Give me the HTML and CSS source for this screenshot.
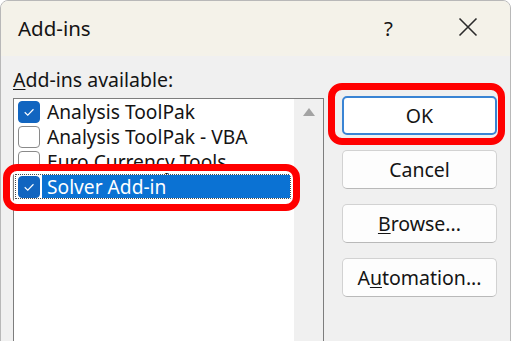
FILE: index.html
```html
<!DOCTYPE html>
<html lang="en">
<head>
  <meta charset="UTF-8">
  <title>Add-ins</title>
  <link rel="stylesheet" href="styles.css">
</head>
<body>
  <div class="stage">
    <div class="dialog">
      <div class="titlebar">
        <span class="title">Add-ins</span>
        <span class="help">?</span>
        <span class="close">
          <svg viewBox="0 0 20 20" width="20" height="20">
            <path d="M1.5 1.5 L18.5 18.5 M18.5 1.5 L1.5 18.5"/>
          </svg>
        </span>
      </div>

      <div class="content">
        <div class="left">
          <div class="label"><u>A</u>dd-ins available:</div>
          <div class="listbox">
            <ul class="items">
              <li class="item">
                <span class="check on"><svg viewBox="0 0 21 21"><path d="M6 10.8 L9.2 13.8 L15.2 7.6"/></svg></span>
                <span class="name">Analysis ToolPak</span>
              </li>
              <li class="item">
                <span class="check"></span>
                <span class="name">Analysis ToolPak - VBA</span>
              </li>
              <li class="item">
                <span class="check"></span>
                <span class="name">Euro Currency Tools</span>
              </li>
              <li class="item selected">
                <span class="check on"><svg viewBox="0 0 21 21"><path d="M6 10.8 L9.2 13.8 L15.2 7.6"/></svg></span>
                <span class="name">Solver Add-in</span>
              </li>
            </ul>
            <div class="scrollbar"><span class="arrow-up"></span></div>
          </div>
        </div>

        <div class="buttons">
          <button class="btn default">OK</button>
          <button class="btn">Cancel</button>
          <button class="btn"><u>B</u>rowse...</button>
          <button class="btn">A<u>u</u>tomation...</button>
        </div>
      </div>
    </div>

    <!-- red highlight marks over the dialog -->
    <div class="mark mark-list"></div>
    <div class="mark mark-ok"></div>
  </div>
</body>
</html>
```

FILE: styles.css
```css
html, body {
  margin: 0; padding: 0;
  background: #fff;
}
body {
  width: 512px; height: 341px; overflow: hidden;
  font-family: "Noto Sans", "Open Sans", sans-serif;
  color: #141414;
}
.stage { position: relative; width: 512px; height: 341px; overflow: hidden; }

.dialog {
  width: 511px; height: 420px;
  box-sizing: border-box;
  border: 1px solid #b8b8b8;
  border-radius: 8px 8px 0 0;
  background: #f0f0f0;
  overflow: hidden;
}

/* title bar */
.titlebar {
  height: 55px;
  background: #f4f2e9;
  display: flex; align-items: center;
  padding-left: 17px;
}
.title { flex: 1; font-size: 20.5px; margin-top: -2px; }
.help { font-size: 20.5px; margin-right: 65px; margin-top: -2px; }
.close { width: 20px; height: 20px; margin-right: 32px; margin-top: -3px; }
.close svg { display: block; fill: none; stroke: #2b2b2b; stroke-width: 1.6; }

/* content */
.content { display: flex; padding-left: 12px; }
.left { width: 311px; }
.label {
  font-size: 19.5px; line-height: 24px;
  margin-top: 12px; margin-bottom: 6px;
}
.label u, .btn u { text-underline-offset: 2px; text-decoration-thickness: 1px; }

.listbox {
  display: flex;
  height: 260px;
  box-sizing: border-box;
  border: 1px solid #7d7d7d;
  background: #fff;
}
.items { flex: 1; list-style: none; margin: 0; padding: 0; }
.item {
  display: flex; align-items: center;
  height: 25px; box-sizing: border-box;
  margin: 0 3px 0 1px;
  border: 1px dotted transparent;
  padding-left: 2px;
  font-size: 19.2px;
  white-space: nowrap;
}
.check {
  flex: none;
  width: 22px; height: 22px; box-sizing: border-box;
  border: 1px solid #8a8a8a; border-radius: 4px;
  background: #fff;
  margin-right: 2px;
}
.check.on { background: #1165c0; border-color: #1165c0; }
.check svg { display: block; width: 100%; height: 100%; fill: none; stroke: #fff; stroke-width: 1.2; }
.name { flex: 1; align-self: stretch; display: flex; align-items: center; padding-left: 5px; }
.item.selected { border-color: #4a4a4a; }
.item.selected .name { background: #0b72d3; color: #fff; }

.scrollbar {
  width: 29px; background: #f0f0f0;
  display: flex; justify-content: center;
}
.arrow-up {
  width: 0; height: 0; margin-top: 9px;
  border-left: 6px solid transparent;
  border-right: 6px solid transparent;
  border-bottom: 8px solid #a3a3a3;
}

/* buttons */
.buttons {
  width: 155px; margin-left: 18px; padding-top: 40px;
  display: flex; flex-direction: column; gap: 15px;
}
.btn {
  height: 39px;
  box-sizing: border-box;
  border: 1px solid #d2d2d2; border-bottom-color: #b9b9b9;
  border-radius: 5px;
  background: #fdfdfd;
  font-family: inherit; font-size: 19.5px; color: #141414;
  padding: 0;
}
.btn.default { border: 2px solid #3a84d4; background: #fff; }

/* red annotation marks */
.mark {
  position: absolute;
  box-sizing: border-box;
  border: 7px solid #f00;
  border-radius: 14px;
  pointer-events: none;
}
.mark-list { left: 3px; top: 164px; width: 297px; height: 47px; box-shadow: inset 0 0 0 2px #fff; }
.mark-ok { left: 328px; top: 83px; width: 177px; height: 62px; }
```
